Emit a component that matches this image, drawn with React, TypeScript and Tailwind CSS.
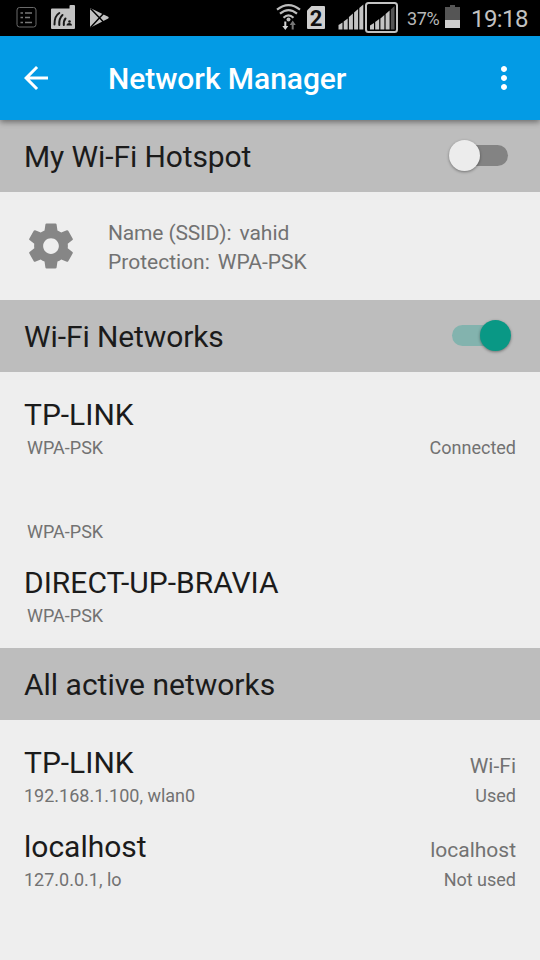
import React, { useState } from "react";

type Network = {
  name: string;
  info: string;
  type?: string;
  status?: string;
};

const wifiNetworks: Network[] = [
  { name: "TP-LINK", info: "WPA-PSK", status: "Connected" },
  { name: "", info: "WPA-PSK" },
  { name: "DIRECT-UP-BRAVIA", info: "WPA-PSK" },
];

const activeNetworks: Network[] = [
  {
    name: "TP-LINK",
    info: "192.168.1.100, wlan0",
    type: "Wi-Fi",
    status: "Used",
  },
  {
    name: "localhost",
    info: "127.0.0.1, lo",
    type: "localhost",
    status: "Not used",
  },
];

const StatusBar = () => {
  return (
    <div className="flex h-9 items-center justify-between bg-black text-[#b8b8b8]">
      <svg width="120" height="36" viewBox="0 0 120 36" fill="none">
        {/* list */}
        <rect x="17" y="7.5" width="19" height="19.5" rx="2.5" stroke="#6a6a6a" />
        <path
          d="M20.5 13h2.5M20.5 17.5h2.5M20.5 22.5h2.5M25 13h7M25 17.5h5M25 22.5h7"
          stroke="#777"
          strokeWidth="1.3"
        />
        {/* cast */}
        <path
          d="M51 9.500q0-1 1-1h17.500V6q0-1 1-1H74q1 0 1 1v22q0 1-1 1H52q-1 0-1-1z"
          fill="#c2c2c2"
        />
        <path
          d="M54.500 24.500q-.2-8.500 4.800-11.500M59.300 25q-.5-6.500 3.200-10M63.800 25q-.2-4.500 1.700-6.500"
          stroke="#161616"
          strokeWidth="2"
          strokeLinecap="round"
        />
        <path d="M66.500 25.500q0-2.500 2.700-2.500t2.800 2.500z" fill="#161616" />
        <circle cx="69.500" cy="21.500" r="1.300" fill="#161616" />
        {/* play store */}
        <path
          d="M90 8.500q.5-.5 1.200 0l17 8.200q1.200.9 0 1.900l-17 8.600q-.8.300-1.200-.3z"
          fill="#c2c2c2"
        />
        <path d="M90.500 8.500l13.500 14M90.500 27.500L104 13" stroke="#000" strokeWidth="1.5" />
      </svg>

      <div className="flex items-center">
        <svg width="130" height="36" viewBox="0 0 130 36" fill="none">
          {/* wifi */}
          <g stroke="#bdbdbd" strokeWidth="2.2">
            <path d="M7 9.700q11.500-9 23 0" />
            <path d="M10 13.700q8.500-7 17 0" />
            <path d="M13.500 17.700q5-4.500 10 0" />
          </g>
          <circle cx="18.500" cy="19.500" r="2" fill="#bdbdbd" />
          <path d="M14.300 21.500h2v4.500h2l-3 4-3-4h2z" fill="#d5d5d5" />
          <path d="M21.700 29.500h2V25h2l-3-4.500-3 4.500h2z" fill="#777" />
          {/* sim 2 */}
          <path d="M41.500 6H54q1 0 1 1v21q0 1-1 1H38q-1 0-1-1V10.500z" fill="#cfcfcf" />
          <text
            x="46"
            y="25.5"
            textAnchor="middle"
            fontSize="22"
            fontWeight="700"
            fill="#111"
            className="font-['Roboto',sans-serif]"
          >
            2
          </text>
          {/* signal */}
          <g fill="#c4c4c4">
            <path d="M68.500 25l4-2.500v7h-4z" />
            <path d="M73.700 21.500l4-3v11h-4z" />
            <path d="M78.900 17l4-3.500v16h-4z" />
            <path d="M84.100 12.500l4-3.500v20.500h-4z" />
            <path d="M89.300 8l4-3.500v25h-4z" />
          </g>
          <rect x="96" y="3" width="31" height="29" rx="2.5" stroke="#c4c4c4" strokeWidth="2" />
          <g fill="#c4c4c4">
            <path d="M100 25.500l4-2.500v6.500h-4z" />
            <path d="M105.200 22l4-3v10.500h-4z" />
            <path d="M110.400 18.500l4-3.500v14.500h-4z" />
            <path d="M115.600 14l4-3.500v19h-4z" />
            <path d="M120.800 9.500l3.700-3.500v23.500h-3.700z" fill="#555" />
          </g>
        </svg>
        <span className="ml-[7px] w-[38px] pt-0.5 text-lg leading-[34px] tracking-[-0.4px]">
          37%
        </span>
        <svg width="15" height="36" viewBox="0 0 15 36">
          <path d="M5 5h5v2h5v21H0V7h5z" fill="#555" />
          <path d="M0 20h15v8H0z" fill="#cfcfcf" />
        </svg>
        <span className="ml-[11px] w-[69px] pt-0.5 text-2xl leading-[34px] tracking-[-0.6px] text-[#c2c2c2]">
          19:18
        </span>
      </div>
    </div>
  );
};

const Switch = ({
  checked,
  onClick,
}: {
  checked: boolean;
  onClick: () => void;
}) => {
  return (
    <button
      type="button"
      role="switch"
      aria-checked={checked}
      onClick={onClick}
      className={`mb-px flex h-[21px] w-14 items-center rounded-full ${
        checked ? "justify-end bg-[#83b3ae]" : "justify-start bg-[#838383]"
      }`}
    >
      <span
        className={`size-[31px] shrink-0 rounded-full shadow-[0_1px_3px_rgba(0,0,0,0.4)] ${
          checked ? "-mr-[3px] bg-[#099885]" : "-ml-[3px] bg-[#ececec]"
        }`}
      />
    </button>
  );
};

const SectionHeader = ({
  title,
  children,
}: {
  title: string;
  children?: React.ReactNode;
}) => {
  return (
    <div className="flex h-[72px] items-center justify-between bg-[#bdbdbd] pr-8 pl-6">
      <h2
        className={`pt-0.5 text-[30px] leading-9 text-[#1b1b1b] ${
          children ? "tracking-[-0.1px]" : ""
        }`}
      >
        {title}
      </h2>
      {children}
    </div>
  );
};

const NetworkRow = ({
  network,
  indent,
}: {
  network: Network;
  indent?: boolean;
}) => {
  return (
    <li className="h-[84px] px-6 pt-3 text-[#727272]">
      <div className="flex h-[38px] items-baseline justify-between">
        <span className="text-[30px] leading-[38px] text-[#1b1b1b]">
          {network.name}
        </span>
        <span className="text-[21px] leading-6">{network.type}</span>
      </div>
      <div
        className={`flex justify-between text-lg leading-7 ${
          indent ? "pl-[3px]" : ""
        }`}
      >
        <span>{network.info}</span>
        <span>{network.status}</span>
      </div>
    </li>
  );
};

const App = () => {
  const [hotspot, setHotspot] = useState(false);
  const [wifi, setWifi] = useState(true);

  return (
    <div className="h-[960px] w-[540px] overflow-hidden bg-[#eeeeee] font-['Roboto',sans-serif]">
      <StatusBar />
      <header className="relative flex h-[84px] items-center bg-[#039be5] px-[18px] text-white shadow-[0_2px_6px_rgba(0,0,0,0.45)]">
        <svg width="36" height="36" viewBox="0 0 24 24" fill="currentColor">
          <path d="M20 11H7.830l5.590-5.590L12 4l-8 8 8 8 1.410-1.410L7.830 13H20v-2z" />
        </svg>
        <h1 className="ml-[54px] flex-1 pt-0.5 text-[30px] leading-9 font-medium tracking-[-0.06px]">
          Network Manager
        </h1>
        <svg width="36" height="36" viewBox="0 0 24 24" fill="currentColor">
          <path d="M12 8c1.100 0 2-.9 2-2s-.9-2-2-2-2 .9-2 2 .9 2 2 2zm0 2c-1.100 0-2 .9-2 2s.9 2 2 2 2-.9 2-2-.9-2-2-2zm0 6c-1.100 0-2 .9-2 2s.9 2 2 2 2-.9 2-2-.9-2-2-2z" />
        </svg>
      </header>

      <SectionHeader title="My Wi-Fi Hotspot">
        <Switch checked={hotspot} onClick={() => setHotspot(!hotspot)} />
      </SectionHeader>
      <div className="flex h-[108px] items-center pl-6 text-[21px] leading-[29px] text-[#727272]">
        <svg width="54" height="54" viewBox="0 0 24 24" fill="#868686">
          <path d="M19.430 12.980c.04-.32.07-.64.07-.98s-.03-.66-.07-.98l2.110-1.650c.19-.15.24-.42.12-.64l-2-3.460c-.12-.22-.39-.3-.61-.22l-2.490 1c-.52-.4-1.080-.73-1.690-.98l-.38-2.650C14.460 2.180 14.250 2 14 2h-4c-.25 0-.46.18-.49.42l-.38 2.650c-.61.25-1.170.59-1.690.98l-2.490-1c-.23-.09-.49 0-.61.22l-2 3.460c-.13.22-.07.49.12.64l2.110 1.650c-.04.32-.07.65-.07.98s.03.66.07.98l-2.110 1.650c-.19.15-.24.42-.12.64l2 3.460c.12.22.39.3.61.22l2.490-1c.52.4 1.080.73 1.690.98l.38 2.650c.03.24.24.42.49.42h4c.25 0 .46-.18.49-.42l.38-2.650c.61-.25 1.170-.59 1.690-.98l2.490 1c.23.09.49 0 .61-.22l2-3.460c.12-.22.07-.49-.12-.64l-2.110-1.650zM12 15.500c-1.930 0-3.500-1.570-3.500-3.500s1.570-3.500 3.500-3.500 3.500 1.570 3.500 3.500-1.570 3.500-3.500 3.500z" />
        </svg>
        <div className="ml-[30px] pt-1">
          <p className="flex gap-2">
            <span className="tracking-[-0.15px]">Name (SSID):</span>
            <span>vahid</span>
          </p>
          <p className="flex gap-2">
            <span>Protection:</span>
            <span>WPA-PSK</span>
          </p>
        </div>
      </div>

      <SectionHeader title="Wi-Fi Networks">
        <Switch checked={wifi} onClick={() => setWifi(!wifi)} />
      </SectionHeader>
      <ul className="py-3">
        {wifiNetworks.map((network, index) => (
          <NetworkRow key={index} network={network} indent />
        ))}
      </ul>

      <SectionHeader title="All active networks" />
      <ul className="py-3">
        {activeNetworks.map((network) => (
          <NetworkRow key={network.name} network={network} />
        ))}
      </ul>
    </div>
  );
};

export default App;
